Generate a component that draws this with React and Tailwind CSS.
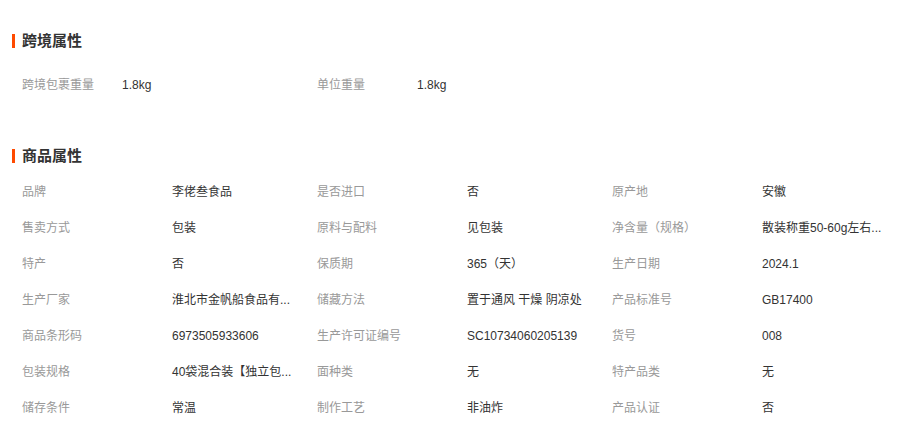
import React from 'react';

const crossBorder = [
  ['跨境包裹重量', '1.8kg'],
  ['单位重量', '1.8kg'],
];

const goodsAttrs = [
  ['品牌', '李佬叁食品'],
  ['是否进口', '否'],
  ['原产地', '安徽'],
  ['售卖方式', '包装'],
  ['原料与配料', '见包装'],
  ['净含量（规格）', '散装称重50-60g左右...'],
  ['特产', '否'],
  ['保质期', '365（天）'],
  ['生产日期', '2024.1'],
  ['生产厂家', '淮北市金帆船食品有...'],
  ['储藏方法', '置于通风 干燥 阴凉处'],
  ['产品标准号', 'GB17400'],
  ['商品条形码', '6973505933606'],
  ['生产许可证编号', 'SC10734060205139'],
  ['货号', '008'],
  ['包装规格', '40袋混合装【独立包...'],
  ['面种类', '无'],
  ['特产品类', '无'],
  ['储存条件', '常温'],
  ['制作工艺', '非油炸'],
  ['产品认证', '否'],
];

function Title({ text }) {
  return (
    <div className="flex items-center h-[24px] pl-[12px]">
      <span className="w-[3px] h-[14px] bg-[#ff4a00] mr-[7px]"></span>
      <h2 className="text-[15px] font-bold text-[#333]">{text}</h2>
    </div>
  );
}

function App() {
  return (
    <div
      className="w-[900px] h-[425px] bg-white overflow-hidden pt-[29px]"
      style={{ fontFamily: '"Liberation Sans", "Noto Sans CJK SC", sans-serif' }}
    >
      {/* 跨境属性 */}
      <Title text="跨境属性" />
      <div className="mt-[14px] pl-[22px] grid grid-cols-[295px_295px_295px] text-[12px]">
        {crossBorder.map(([label, value]) => (
          <div key={label} className="flex items-center h-[36px]">
            <span className="w-[100px] text-[#999]">{label}</span>
            <span className="text-[#333]">{value}</span>
          </div>
        ))}
      </div>

      {/* 商品属性 */}
      <div className="mt-[41px]">
        <Title text="商品属性" />
      </div>
      <div className="mt-[6px] pl-[22px] grid grid-cols-[295px_295px_295px] text-[12px]">
        {goodsAttrs.map(([label, value]) => (
          <div key={label} className="flex items-center h-[36px]">
            <span className="w-[150px] shrink-0 text-[#999]">{label}</span>
            <span className="whitespace-nowrap text-[#333]">{value}</span>
          </div>
        ))}
      </div>
    </div>
  );
}

export default App;
